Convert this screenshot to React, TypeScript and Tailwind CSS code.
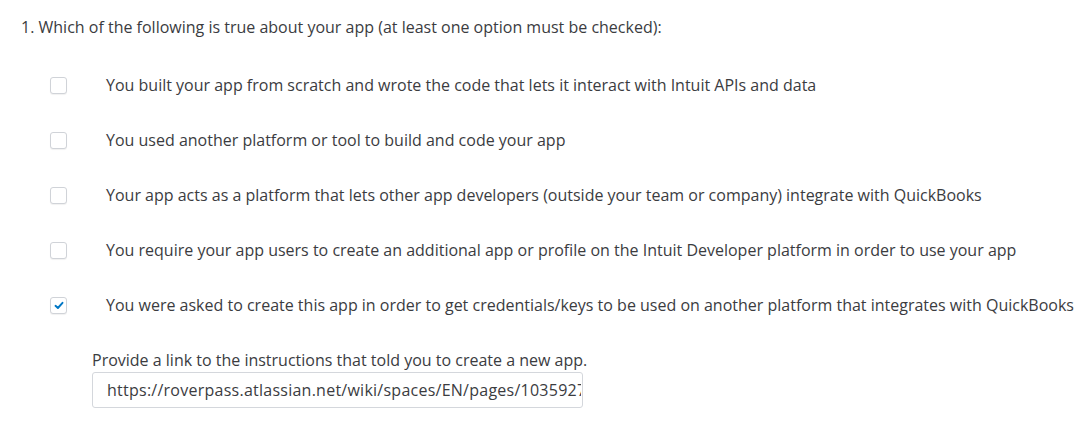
import React from "react";

const options = [
  { label: "You built your app from scratch and wrote the code that lets it interact with Intuit APIs and data", checked: false },
  { label: "You used another platform or tool to build and code your app", checked: false },
  { label: "Your app acts as a platform that lets other app developers (outside your team or company) integrate with QuickBooks", checked: false },
  { label: "You require your app users to create an additional app or profile on the Intuit Developer platform in order to use your app", checked: false },
  { label: "You were asked to create this app in order to get credentials/keys to be used on another platform that integrates with QuickBooks", checked: true },
];

function Box({ checked }: { checked: boolean }) {
  return (
    <span className="flex h-[17px] w-[17px] shrink-0 items-center justify-center rounded-[3px] border border-[#d0d3d8] bg-white shadow-[0_1px_1px_rgba(0,0,0,0.06)]">
      {checked && (
        <svg width="10" height="9" viewBox="0 0 10 9">
          <path d="M1.5 4.8 L3.9 7 L8.5 1.8" fill="none" stroke="#0077c5" strokeWidth="1.9" strokeLinecap="round" strokeLinejoin="round" />
        </svg>
      )}
    </span>
  );
}

export default function App() {
  return (
    <div className="min-h-[426px] w-[1082px] bg-white pl-[21px] pt-[17px] text-[16px] text-[#3b3c3f]" style={{ fontFamily: "'Open Sans', Lato, sans-serif" }}>
      <p className="leading-[20px]">1. Which of the following is true about your app (at least one option must be checked):</p>
      <div className="mt-[38px] flex flex-col gap-[35px] pl-[29px]">
        {options.map((o) => (
          <label key={o.label} className="flex h-[20px] items-center gap-[39px]">
            <Box checked={o.checked} />
            <span className="whitespace-nowrap leading-[20px]">{o.label}</span>
          </label>
        ))}
      </div>
      <div className="mt-[35px] pl-[71px]">
        <p className="leading-[20px]">Provide a link to the instructions that told you to create a new app.</p>
        <input
          readOnly
          value="https://roverpass.atlassian.net/wiki/spaces/EN/pages/1035927553"
          className="mt-[2px] block h-[36px] w-[491px] rounded-[3px] border border-[#d4d7dc] pl-[14px] pr-[1px] text-[16px] tracking-[0.25px] text-[#3b3c3f] outline-none"
          style={{ fontFamily: "'Open Sans', Lato, sans-serif" }}
        />
      </div>
    </div>
  );
}
